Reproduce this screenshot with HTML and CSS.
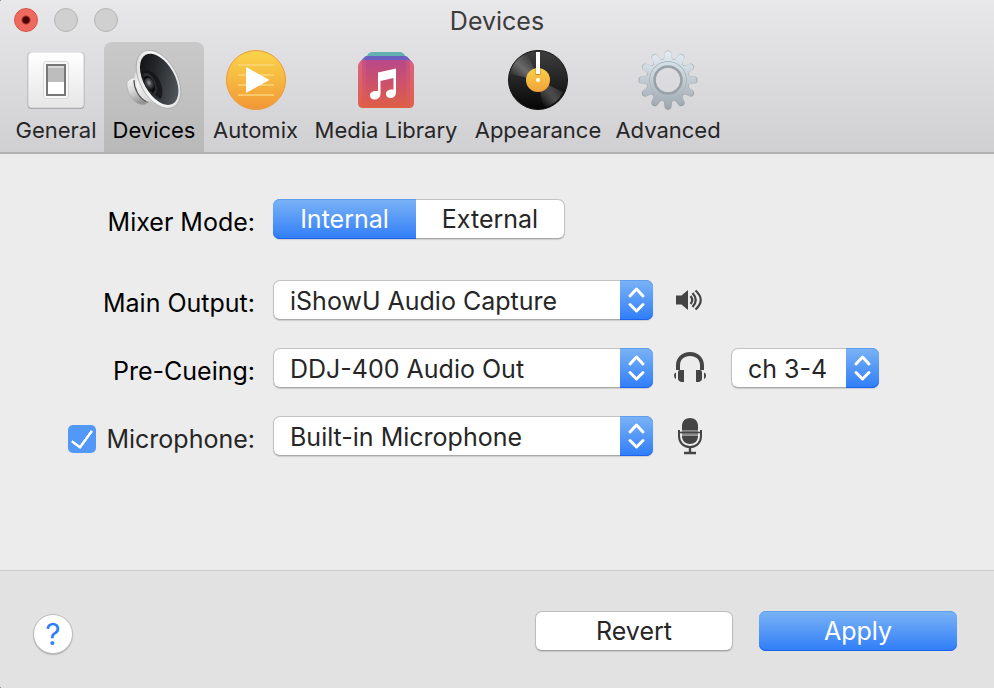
FILE: index.html
```html
<!DOCTYPE html>
<html lang="en">
<head>
<meta charset="utf-8">
<meta name="viewport" content="width=device-width, initial-scale=1">
<title>Devices</title>
<link rel="stylesheet" href="styles.css">
</head>
<body>
<div class="window">
  <header class="chrome">
    <div class="titlebar">
      <div class="lights">
        <button class="light light-close" type="button" aria-label="Close"></button>
        <button class="light" type="button" aria-label="Minimize" disabled></button>
        <button class="light" type="button" aria-label="Zoom" disabled></button>
      </div>
      <h1 class="title">Devices</h1>
    </div>
    <nav class="toolbar">
      <button class="tab" type="button">
        <svg class="tab-icon" viewBox="0 0 60 60" aria-hidden="true">
          <defs>
            <linearGradient id="plate" x1="0" y1="0" x2="0" y2="1"><stop offset="0" stop-color="#fff"/><stop offset="1" stop-color="#e6e6e6"/></linearGradient>
          </defs>
          <rect x="1.500" y="2" width="57" height="57" rx="4" fill="#a9a9ab"/>
          <rect x="2" y="2" width="56" height="56" rx="4" fill="#cfcfd0"/>
          <rect x="2.500" y="2.500" width="55" height="55" rx="3.500" fill="url(#plate)"/>
          <rect x="17.500" y="11.500" width="25" height="37" rx="2.500" fill="#f8f8f8" stroke="#dadada"/>
          <rect x="20" y="14" width="20" height="32" fill="#777"/>
          <rect x="22" y="16" width="16" height="28" fill="#fff"/>
          <rect x="22" y="16" width="16" height="16" fill="#bdbdbd"/>
          <rect x="22" y="16" width="16" height="2" fill="#d9d9d9"/>
        </svg>
        <span>General</span>
      </button>
      <button class="tab tab-current" type="button" aria-current="page">
        <svg class="tab-icon" viewBox="0 0 60 60" aria-hidden="true">
          <defs>
            <linearGradient id="cone" x1="0" y1="0" x2="1" y2="1"><stop offset="0" stop-color="#c4c4c4"/><stop offset=".3" stop-color="#f4f4f4"/><stop offset=".7" stop-color="#d0d0d0"/><stop offset="1" stop-color="#8a8a8a"/></linearGradient>
            <linearGradient id="magnet" x1="0" y1="0" x2=".4" y2="1"><stop offset="0" stop-color="#f8f8f8"/><stop offset=".5" stop-color="#d8d8d8"/><stop offset="1" stop-color="#959595"/></linearGradient>
            <linearGradient id="rim" x1="0" y1="0" x2="1" y2="1"><stop offset="0" stop-color="#cfcfcf"/><stop offset=".4" stop-color="#fafafa"/><stop offset="1" stop-color="#dcdcdc"/></linearGradient>
            <linearGradient id="bowl" x1="0" y1="0" x2=".6" y2="1"><stop offset="0" stop-color="#0b0b0c"/><stop offset=".45" stop-color="#242629"/><stop offset="1" stop-color="#50555a"/></linearGradient>
            <radialGradient id="cap" cx=".5" cy=".4" r=".6"><stop offset="0" stop-color="#9a9ea3"/><stop offset=".4" stop-color="#4b4e52"/><stop offset="1" stop-color="#111"/></radialGradient>
          </defs>
          <path d="M13 28 C8 27 3 30 3 34 C3 43 9 53 17 54.500 C20 55 22 54 25 52 Z" fill="url(#magnet)" stroke="#a0a0a0" stroke-width=".5"/>
          <path d="M13 11 C14 20 10 24 10 31 C11 42 17 50 25 51.500 C31 52 35 56 44 58 L38 20 Z" fill="url(#cone)"/>
          <path d="M10 30 C10 39 15 48 22 51.500" fill="none" stroke="#555" stroke-width="1.200"/>
          <ellipse cx="34.500" cy="29.300" rx="18.600" ry="31.500" transform="rotate(-29 34.500 29.300)" fill="url(#rim)" stroke="#9c9c9c" stroke-width=".6"/>
          <ellipse cx="35.200" cy="29.300" rx="15.600" ry="28" transform="rotate(-29 35.200 29.300)" fill="url(#bowl)"/>
          <path d="M18 22 C25 16 36 26 38 38 C39 44 38 48 36 49 C27 43 20 33 18 22 Z" fill="#111214" opacity=".75"/>
          <path d="M19 24 C25 20 33 29 33 42 L31 45 C25 39 21 33 19 24 Z" fill="#2b2e31"/>
          <path d="M20 27 C25 23 31 31 31 40 L29 43 C24 38 21 33 20 27 Z" fill="#090909"/>
          <ellipse cx="25.500" cy="34" rx="4.500" ry="6.500" transform="rotate(-25 25.500 34)" fill="url(#cap)"/>
        </svg>
        <span>Devices</span>
      </button>
      <button class="tab" type="button">
        <svg class="tab-icon" viewBox="0 0 60 60" aria-hidden="true">
          <defs><linearGradient id="sun" x1="0" y1="0" x2="0" y2="1"><stop offset="0" stop-color="#f9d44a"/><stop offset=".5" stop-color="#f7b83f"/><stop offset="1" stop-color="#f29536"/></linearGradient></defs>
          <circle cx="30" cy="30" r="29.500" fill="url(#sun)" stroke="#e99b3b"/>
          <path d="M12 15H48M12 25H48M12 35H48M12 45H48" stroke="#fbd77a" stroke-width="2" opacity=".75"/>
          <path d="M20 17 L43.500 30 L20 43 Z" fill="#fff"/>
        </svg>
        <span>Automix</span>
      </button>
      <button class="tab" type="button">
        <svg class="tab-icon" viewBox="0 0 60 60" aria-hidden="true">
          <defs>
            <linearGradient id="album" x1="0" y1="0" x2="0" y2="1"><stop offset="0" stop-color="#b54689"/><stop offset=".5" stop-color="#cb506a"/><stop offset="1" stop-color="#df6044"/></linearGradient>
            <linearGradient id="edge" x1="0" y1="0" x2="0" y2="1"><stop offset="0" stop-color="#dc6283"/><stop offset="1" stop-color="#e05f4a"/></linearGradient>
          </defs>
          <path d="M10 7 L12.500 3.500 Q14 2 16 2 H44 Q46 2 47.500 3.500 L50 7 Z" fill="#63b0b0"/>
          <path d="M4 12 L8.500 7 Q9.500 6 11 6 H49 Q50.500 6 51.500 7 L56 12 Z" fill="#6b5fc0"/>
          <path d="M2 16 Q2 13 6 10 H54 Q58 13 58 16 V53 Q58 58 53 58 H7 Q2 58 2 53 Z" fill="url(#edge)"/>
          <path d="M6 10 H54 V54 Q54 58 50 58 H10 Q6 58 6 54 Z" fill="url(#album)" opacity=".55"/>
          <path d="M10 10 H50 V58 H10 Z" fill="url(#album)" opacity=".8"/>
          <path d="M22 22.500 L40 18.500 V42 C40 46 37.500 48 34.500 48 C31.500 48 30 46 30 44 C30 41 32.500 39.500 36 39.500 H37.500 V28 L24.500 31 V43.500 C24.500 47.500 21.500 49.500 18.500 49.500 C15.500 49.500 14 47.500 14 45.500 C14 42.500 16.500 41 20 41 H22 Z" fill="#fff"/>
        </svg>
        <span>Media Library</span>
      </button>
      <button class="tab" type="button">
        <svg class="tab-icon" viewBox="0 0 60 60" aria-hidden="true">
          <defs>
            <linearGradient id="vinyl" x1="0" y1="0" x2="0" y2="1"><stop offset="0" stop-color="#3e3e3e"/><stop offset=".5" stop-color="#242424"/><stop offset="1" stop-color="#050505"/></linearGradient>
            <linearGradient id="shine" gradientUnits="userSpaceOnUse" x1="2" y1="24" x2="20" y2="5"><stop offset="0" stop-color="#777" stop-opacity="0"/><stop offset=".5" stop-color="#6a6a6a"/><stop offset="1" stop-color="#777" stop-opacity="0"/></linearGradient>
            <linearGradient id="shine-low" gradientUnits="userSpaceOnUse" x1="34" y1="54" x2="55" y2="37"><stop offset="0" stop-color="#666" stop-opacity="0"/><stop offset=".5" stop-color="#4c4c4c"/><stop offset="1" stop-color="#666" stop-opacity="0"/></linearGradient>
            <linearGradient id="label" x1="0" y1="0" x2="0" y2="1"><stop offset="0" stop-color="#f8cf49"/><stop offset="1" stop-color="#f3a33a"/></linearGradient>
          </defs>
          <circle cx="30" cy="30" r="29.500" fill="url(#vinyl)" stroke="#161616"/>
          <path d="M30 30 L2 24 A29 29 0 0 1 20 3 Z" fill="url(#shine)"/>
          <path d="M30 30 L55 42 A29 29 0 0 1 35 58 Z" fill="url(#shine-low)"/>
          <circle cx="30" cy="30" r="12" fill="url(#label)"/>
          <path d="M27.500 18 V25 H32.500 V18" fill="#c98b27"/>
          <rect x="28" y="2" width="4" height="22" fill="#fff"/>
          <circle cx="30" cy="30" r="2" fill="#fff"/>
        </svg>
        <span>Appearance</span>
      </button>
      <button class="tab" type="button">
        <svg class="tab-icon" viewBox="0 0 60 60" aria-hidden="true">
          <defs>
            <linearGradient id="steel" x1="0" y1="0" x2="0" y2="1"><stop offset="0" stop-color="#e3eff5"/><stop offset=".5" stop-color="#c3ccd3"/><stop offset="1" stop-color="#9ba5ae"/></linearGradient>
            <linearGradient id="steel-edge" x1="0" y1="0" x2="0" y2="1"><stop offset="0" stop-color="#b9c5cb"/><stop offset="1" stop-color="#8c959d"/></linearGradient>
            <path id="tooth" d="M22 11 C26 10 26.500 7 26.500 4 C26.500 -1 33.500 -1 33.500 4 C33.500 7 34 10 38 11 Z"/>
            <g id="gear">
              <circle cx="30" cy="30" r="21.500"/>
              <use href="#tooth"/>
              <use href="#tooth" transform="rotate(30 30 30)"/>
              <use href="#tooth" transform="rotate(60 30 30)"/>
              <use href="#tooth" transform="rotate(90 30 30)"/>
              <use href="#tooth" transform="rotate(120 30 30)"/>
              <use href="#tooth" transform="rotate(150 30 30)"/>
              <use href="#tooth" transform="rotate(180 30 30)"/>
              <use href="#tooth" transform="rotate(210 30 30)"/>
              <use href="#tooth" transform="rotate(240 30 30)"/>
              <use href="#tooth" transform="rotate(270 30 30)"/>
              <use href="#tooth" transform="rotate(300 30 30)"/>
              <use href="#tooth" transform="rotate(330 30 30)"/>
            </g>
            <mask id="gear-outer"><use href="#gear" fill="#fff"/><circle cx="30" cy="30" r="12.500" fill="#000"/></mask>
            <mask id="gear-inner"><use href="#gear" fill="#fff" transform="translate(1 1) scale(.967)"/><circle cx="30" cy="30" r="12.500" fill="#000"/></mask>
          </defs>
          <rect width="60" height="60" fill="url(#steel-edge)" mask="url(#gear-outer)"/>
          <rect width="60" height="60" fill="url(#steel)" mask="url(#gear-inner)"/>
          <circle cx="30" cy="30" r="18.500" fill="none" stroke="#aab5bc" stroke-width="1"/>
          <circle cx="30" cy="30" r="13.500" fill="none" stroke="#98a1a8" stroke-width="2.500"/>
        </svg>
        <span>Advanced</span>
      </button>
    </nav>
  </header>

  <form class="panel" id="devices">
    <div class="row row-mode">
      <span class="label" id="mode">Mixer Mode:</span>
      <div class="segments" role="radiogroup" aria-labelledby="mode">
        <label class="segment"><input type="radio" name="mode" value="internal" checked><span>Internal</span></label>
        <label class="segment"><input type="radio" name="mode" value="external"><span>External</span></label>
      </div>
    </div>
    <div class="row">
      <label class="label" for="output">Main Output:</label>
      <div class="popup">
        <select id="output"><option>iShowU Audio Capture</option></select>
        <svg class="arrows" viewBox="0 0 33 40" aria-hidden="true"><path d="M10 16 L16.500 9 L23 16 M10 24.500 L16.500 31 L23 24.500"/></svg>
      </div>
      <svg class="glyph" viewBox="0 0 36 40" aria-hidden="true">
        <path d="M4 15.500 H9.500 L16 10 V30 L9.500 24.500 H4 Z" fill="#444"/>
        <path d="M18.500 16 Q22 20 18.500 24 M20.500 13 Q27 20 20.500 27 M23.500 10.500 Q34 20 23.500 29.500" fill="none" stroke="#444" stroke-width="2.200"/>
      </svg>
    </div>
    <div class="row">
      <label class="label" for="cue">Pre-Cueing:</label>
      <div class="popup">
        <select id="cue"><option>DDJ-400 Audio Out</option></select>
        <svg class="arrows" viewBox="0 0 33 40" aria-hidden="true"><path d="M10 16 L16.500 9 L23 16 M10 24.500 L16.500 31 L23 24.500"/></svg>
      </div>
      <svg class="glyph" viewBox="0 0 36 40" aria-hidden="true">
        <path d="M4 22 V17.500 C4 9.500 10 4 18 4 S32 9.500 32 17.500 V22 H28 V17.500 C28 11.500 24 8 18 8 S8 11.500 8 17.500 V22 Z" fill="#444"/>
        <path d="M6 24 Q6 22 8 22 H12 V34 H9 Q6 33 6 31 Z M30 24 Q30 22 28 22 H24 V34 H27 Q30 33 30 31 Z" fill="#444"/>
        <path d="M4 24.500 V31 Q2 30 2 27.500 T4 24.500 Z M32 24.500 V31 Q34 30 34 27.500 T32 24.500 Z" fill="#444"/>
      </svg>
      <div class="popup popup-small">
        <select aria-label="Channels"><option>ch 3-4</option></select>
        <svg class="arrows" viewBox="0 0 33 40" aria-hidden="true"><path d="M10 16 L16.500 9 L23 16 M10 24.500 L16.500 31 L23 24.500"/></svg>
      </div>
    </div>
    <div class="row">
      <label class="label label-check"><input type="checkbox" checked><span>Microphone:</span></label>
      <div class="popup">
        <select aria-label="Microphone"><option>Built-in Microphone</option></select>
        <svg class="arrows" viewBox="0 0 33 40" aria-hidden="true"><path d="M10 16 L16.500 9 L23 16 M10 24.500 L16.500 31 L23 24.500"/></svg>
      </div>
      <svg class="glyph" viewBox="0 0 36 40" aria-hidden="true">
        <path d="M10 14 V9 Q11 2 18 2 T26 9 V14 Z" fill="#444"/>
        <path d="M10 14 H26 V19 H10 Z" fill="#8b8b8b"/>
        <path d="M10 19.500 H26 V21 Q25 28 18 28 T10 21 Z" fill="#444"/>
        <path d="M6 16.500 H30" stroke="#444" stroke-width="1.600"/>
        <path d="M7 14 V20 C7 26.500 11.500 31 18 31 S29 26.500 29 20 V14" fill="none" stroke="#444" stroke-width="2"/>
        <path d="M18 31 V37 M12 37 H24" stroke="#444" stroke-width="2.400"/>
      </svg>
    </div>
  </form>

  <footer class="footer">
    <button class="help" type="button" aria-label="Help">?</button>
    <div class="actions">
      <button class="button" type="reset" form="devices">Revert</button>
      <button class="button button-primary" type="submit" form="devices">Apply</button>
    </div>
  </footer>
</div>
</body>
</html>
```
FILE: styles.css
```css
* { box-sizing: border-box; }

body {
  margin: 0;
  background: #222;
  color: #000;
  font: 25px/30px Inter, "Liberation Sans", sans-serif;
}

button, select, input { font: inherit; color: inherit; margin: 0; }

.window {
  display: flex;
  flex-direction: column;
  min-height: 100vh;
  background: #ececec;
  border-radius: 2px 0 0 2px;
  overflow: hidden;
}

/* Title bar and toolbar */
.chrome {
  background: linear-gradient(#e8e7e9, #d0cfd1);
  border-bottom: 2px solid #b0b0b0;
}

.titlebar {
  display: grid;
  grid-template-columns: 1fr auto 1fr;
  align-items: center;
  height: 42px;
  padding: 0 14px 2px;
}

.lights { display: flex; gap: 16px; }

.light {
  width: 24px;
  height: 24px;
  padding: 0;
  border: 1px solid #b5b5b5;
  border-radius: 50%;
  background: #d0d0d0;
}

.light-close {
  border-color: #d65348;
  background: radial-gradient(circle, #4c0502 0 3px, #ee6a5f 5px);
}

.title {
  margin: 0;
  padding-top: 2px;
  color: #3c3c3c;
  font-size: 25px;
  font-weight: 400;
}

.toolbar {
  display: grid;
  grid-template-columns: 96px 100px 103px 158px 146px 114px;
  padding-left: 8px;
}

.tab {
  display: flex;
  flex-direction: column;
  align-items: center;
  gap: 5px;
  padding: 8px 0 7px;
  border: 0;
  border-radius: 8px 8px 0 0;
  background: none;
  color: #262628;
  font-size: 22px;
  line-height: 30px;
  white-space: nowrap;
}

.tab-current { background: linear-gradient(#c9c9c9, #b9b9b9); color: #000; }

.tab-icon { width: 60px; height: 60px; }

/* Settings */
.panel {
  flex: 1;
  display: flex;
  flex-direction: column;
  gap: 28px;
  padding: 45px 40px 40px 68px;
}

.row { display: flex; align-items: center; }
.row-mode { margin-bottom: 13px; }

.label {
  width: 187px;
  margin-right: 18px;
  padding-top: 5px;
  text-align: right;
  white-space: nowrap;
}

.label-check {
  display: flex;
  align-items: center;
  justify-content: space-between;
  color: #262626;
}

.label-check input {
  appearance: none;
  display: grid;
  place-items: center;
  width: 28px;
  height: 28px;
  border-radius: 5px;
  background: #5198f8;
}

.label-check input:checked::before {
  content: "";
  width: 9px;
  height: 19px;
  margin-bottom: 4px;
  border: solid #fff;
  border-width: 0 3px 3px 0;
  border-radius: 1px;
  transform: rotate(36deg);
}

.segments {
  display: grid;
  grid-template-columns: 142px 148px;
  height: 40px;
  border: 1px solid #c2c2c2;
  border-bottom-color: #a9a9a9;
  border-radius: 7px;
  background: #fff;
  box-shadow: 0 1px 1px #0002;
}

.segment { display: flex; margin: -1px; }
.segment:first-child { margin-right: 0; }
.segment input { appearance: none; width: 0; }

.segment span {
  flex: 1;
  padding: 5px 0;
  color: #262626;
  text-align: center;
}

.segment input:checked + span {
  border-radius: 7px 0 0 7px;
  background: linear-gradient(#7bb3f5, #2f7df8);
  box-shadow: inset 0 1px #5e9eee, inset 0 -1px #1c62f2;
  color: #fff;
}

.popup { position: relative; width: 380px; }
.popup-small { width: 148px; }

.popup select {
  appearance: none;
  display: block;
  width: 100%;
  height: 40px;
  padding: 1px 40px 0 16px;
  border: 1px solid #c2c2c2;
  border-bottom-color: #a9a9a9;
  border-radius: 7px;
  background: #fff;
  box-shadow: 0 1px 1px #0002;
  color: #262626;
}

.arrows {
  position: absolute;
  top: 0;
  right: 0;
  width: 33px;
  height: 40px;
  border-radius: 0 7px 7px 0;
  background: linear-gradient(#7bb3f5, #2f7df8);
  box-shadow: inset 0 1px #5e9eee, inset 0 -1px #1c62f2;
  pointer-events: none;
}

.arrows path {
  fill: none;
  stroke: #fff;
  stroke-width: 3;
  stroke-linecap: round;
  stroke-linejoin: round;
}

.glyph { width: 36px; height: 40px; margin: 0 23px 0 19px; }

/* Footer */
.footer {
  display: flex;
  align-items: center;
  justify-content: space-between;
  height: 118px;
  padding: 2px 37px 0 33px;
  border-top: 1px solid #cdcdcd;
  background: #e2e2e2;
}

.help {
  width: 40px;
  height: 40px;
  margin-top: 6px;
  padding: 0;
  border: 1px solid #bcbcbc;
  border-radius: 50%;
  background: #fff;
  box-shadow: 0 1px 1px #0003;
  color: #2f7df8;
  font-size: 30px;
}

.actions { display: flex; gap: 26px; }

.button {
  width: 198px;
  height: 40px;
  padding: 0;
  border: 1px solid #bcbcbc;
  border-bottom-color: #a3a3a3;
  border-radius: 7px;
  background: #fff;
  box-shadow: 0 1px 1px #0002;
  color: #262626;
}

.button-primary {
  border: 0;
  background: linear-gradient(#7bb3f5, #2f7df8);
  box-shadow: inset 0 1px #5e9eee, inset 0 -1px #1c62f2;
  color: #fff;
}
```
